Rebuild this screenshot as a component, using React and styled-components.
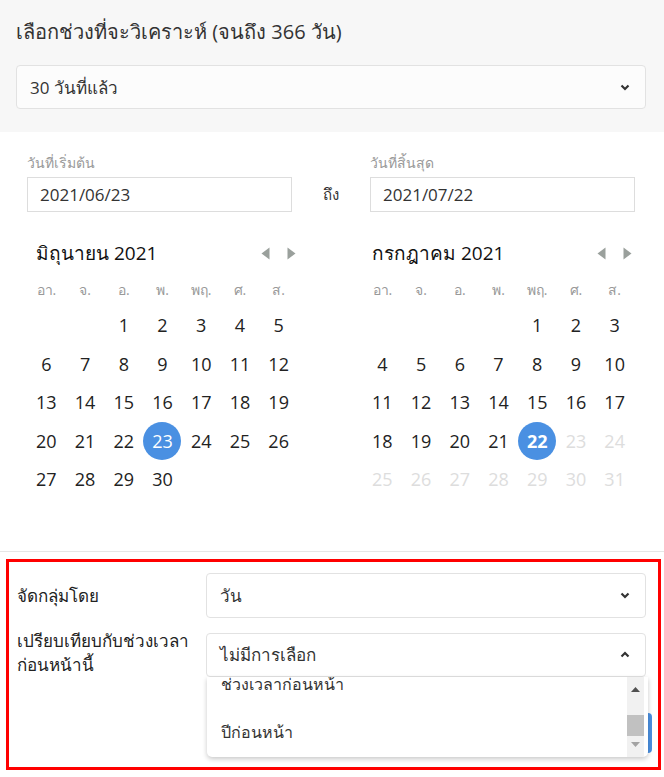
import React from "react";
import styled, { createGlobalStyle } from "styled-components";

const GlobalStyle = createGlobalStyle`
  body {
    margin: 0;
    background: #fff;
    font-family: "Open Sans", "Noto Sans", sans-serif;
    color: #333;
  }
`;

const Page = styled.div`
  width: 664px;
`;

const TopPanel = styled.div`
  background: #f7f7f7;
  padding: 18px 18px 23px 16px;
`;

const Title = styled.div`
  font-size: 20px;
  line-height: 28px;
  color: #333;
  margin-bottom: 19px;
`;

const SelectBox = styled.div`
  height: ${p => p.$h || 44}px;
  box-sizing: border-box;
  display: flex;
  align-items: center;
  justify-content: space-between;
  padding: 0 15px 0 13px;
  border: 1px solid #e2e2e2;
  border-radius: 4px;
  background: ${p => p.$bg || "#fff"};
  font-size: 17px;
  color: #333;
`;

const Chevron = ({ up }) => (
  <svg width="10" height="7" viewBox="0 0 10 7">
    <polyline
      points={up ? "1.5,5.5 5,2 8.5,5.5" : "1.5,1.5 5,5 8.5,1.5"}
      fill="none"
      stroke="#333"
      strokeWidth="2.2"
    />
  </svg>
);

const RangeSection = styled.div`
  padding: 20px 29px 0 27px;
`;

const DateRow = styled.div`
  display: grid;
  grid-template-columns: 265px 1fr 265px;
  align-items: end;
`;

const Field = styled.div`
  display: flex;
  flex-direction: column;
`;

const FieldLabel = styled.div`
  font-size: 14px;
  line-height: 22px;
  color: #999;
  margin-bottom: 3px;
`;

const DateInput = styled.div`
  height: 35px;
  box-sizing: border-box;
  border: 1px solid #ddd;
  padding-left: 12px;
  display: flex;
  align-items: center;
  font-size: 17px;
  color: #333;
`;

const ToText = styled.div`
  height: 35px;
  display: flex;
  align-items: center;
  justify-content: center;
  font-size: 15px;
  color: #333;
`;

const Calendars = styled.div`
  display: flex;
  justify-content: space-between;
  padding-right: 1px;
  margin-top: 24px;
`;

const Calendar = styled.div`
  width: 271px;
`;

const CalHeader = styled.div`
  display: flex;
  align-items: center;
  justify-content: space-between;
  height: 34px;
  padding: 0 2px 0 9px;
`;

const MonthName = styled.div`
  font-size: 19px;
  font-weight: 500;
  color: #111;
`;

const NavArrows = styled.div`
  display: flex;
  gap: 17px;
  align-items: center;
`;

const Arrow = ({ dir }) => (
  <svg width="9" height="13" viewBox="0 0 9 13">
    <polygon
      points={dir === "left" ? "8.5,0.5 8.5,12.5 0.5,6.5" : "0.5,0.5 0.5,12.5 8.5,6.5"}
      fill="#9aa09c"
    />
  </svg>
);

const Grid = styled.div`
  display: grid;
  grid-template-columns: repeat(7, 1fr);
  grid-auto-rows: ${p => p.$row}px;
  align-items: center;
  justify-items: center;
`;

const WeekDay = styled.div`
  font-size: 14px;
  color: #999;
  padding-top: 4px;
`;

const Day = styled.div`
  width: 38px;
  height: 38px;
  border-radius: 50%;
  display: flex;
  align-items: center;
  justify-content: center;
  font-size: 18px;
  color: ${p => (p.$selected ? "#fff" : p.$muted ? "#ddd" : "#222")};
  background: ${p => (p.$selected ? "#4a90e2" : "transparent")};
  font-weight: ${p => (p.$bold ? 700 : 400)};
`;

const Divider = styled.div`
  height: 1px;
  background: #e6e6e6;
  margin-top: 52px;
`;

const Frame = styled.div`
  margin: 7px 3px 0 6px;
  border: 3px solid #ff0000;
  padding: 11px 12px 14px 8px;
`;

const FormRow = styled.div`
  display: grid;
  grid-template-columns: 189px 1fr;
  margin-bottom: ${p => p.$mb || 0}px;
`;

const RowLabel = styled.div`
  font-size: 17px;
  line-height: 24px;
  color: #222;
  padding-top: ${p => p.$pt || 0}px;
  margin-top: ${p => p.$mt || 0}px;
`;

const SelectWrap = styled.div`
  position: relative;
`;

const Dropdown = styled.div`
  position: absolute;
  top: 100%;
  left: 1px;
  right: -2px;
  height: 80px;
  display: flex;
  background: #fff;
  border-radius: 0 0 5px 5px;
  box-shadow: 0 2px 5px rgba(0, 0, 0, 0.22);
  overflow: hidden;
  z-index: 2;
`;

const Viewport = styled.div`
  flex: 1;
  overflow: hidden;
`;

const Items = styled.div`
  margin-top: -${p => p.$scroll}px;
`;

const Item = styled.div`
  height: 48px;
  display: flex;
  align-items: center;
  padding-left: 14px;
  font-size: 16px;
  color: #333;
`;

const Scrollbar = styled.div`
  width: 17px;
  margin-right: 4px;
  background: #f1f1f1;
  display: flex;
  flex-direction: column;
  align-items: center;
`;

const ScrollArrow = styled.div`
  height: 17px;
  display: flex;
  align-items: center;
  justify-content: center;
  margin-top: ${p => p.$mt || 0}px;
`;

const Thumb = styled.div`
  width: 100%;
  height: 21px;
  background: #c1c1c1;
  margin-top: 17px;
`;

const ButtonRow = styled.div`
  display: flex;
  justify-content: flex-end;
  margin-top: 36px;
  margin-right: -6px;
`;

const ApplyButton = styled.div`
  width: 90px;
  height: 40px;
  border-radius: 4px;
  background: #4a90e2;
`;

const WEEK = ["อา.", "จ.", "อ.", "พ.", "พฤ.", "ศ.", "ส."];

const MonthCalendar = ({ name, lead, days, selected, boldSelected }) => {
  const cells = [];
  for (let i = 0; i < lead; i++) cells.push(<div key={"e" + i} />);
  for (let d = 1; d <= days; d++) {
    cells.push(
      <Day
        key={d}
        $selected={d === selected}
        $muted={boldSelected && d > selected}
        $bold={boldSelected && d === selected}
      >
        {d}
      </Day>
    );
  }
  return (
    <Calendar>
      <CalHeader>
        <MonthName>{name}</MonthName>
        <NavArrows>
          <Arrow dir="left" />
          <Arrow dir="right" />
        </NavArrows>
      </CalHeader>
      <Grid $row={36}>
        {WEEK.map(w => (
          <WeekDay key={w}>{w}</WeekDay>
        ))}
      </Grid>
      <Grid $row={38.5}>{cells}</Grid>
    </Calendar>
  );
};

export default function App() {
  return (
    <Page>
      <GlobalStyle />
      <TopPanel>
        <Title>เลือกช่วงที่จะวิเคราะห์ (จนถึง 366 วัน)</Title>
        <SelectBox $bg="#fcfcfc">
          <span>30 วันที่แล้ว</span>
          <Chevron />
        </SelectBox>
      </TopPanel>

      <RangeSection>
        <DateRow>
          <Field>
            <FieldLabel>วันที่เริ่มต้น</FieldLabel>
            <DateInput>2021/06/23</DateInput>
          </Field>
          <ToText>ถึง</ToText>
          <Field>
            <FieldLabel>วันที่สิ้นสุด</FieldLabel>
            <DateInput>2021/07/22</DateInput>
          </Field>
        </DateRow>
        <Calendars>
          <MonthCalendar name="มิถุนายน 2021" lead={2} days={30} selected={23} />
          <MonthCalendar name="กรกฎาคม 2021" lead={4} days={31} selected={22} boldSelected />
        </Calendars>
      </RangeSection>

      <Divider />

      <Frame>
        <FormRow $mb={15}>
          <RowLabel $pt={11}>จัดกลุ่มโดย</RowLabel>
          <SelectBox $h={45}>
            <span>วัน</span>
            <Chevron />
          </SelectBox>
        </FormRow>
        <FormRow>
          <RowLabel $mt={-4}>
            เปรียบเทียบกับช่วงเวลา
            <br />
            ก่อนหน้านี้
          </RowLabel>
          <SelectWrap>
            <SelectBox>
              <span>ไม่มีการเลือก</span>
              <Chevron up />
            </SelectBox>
            <Dropdown>
              <Viewport>
                <Items $scroll={16}>
                  <Item>ช่วงเวลาก่อนหน้า</Item>
                  <Item>ปีก่อนหน้า</Item>
                </Items>
              </Viewport>
              <Scrollbar>
                <ScrollArrow $mt={4}>
                  <svg width="9" height="5" viewBox="0 0 9 5">
                    <polygon points="0,5 9,5 4.5,0" fill="#505050" />
                  </svg>
                </ScrollArrow>
                <Thumb />
                <ScrollArrow>
                  <svg width="9" height="5" viewBox="0 0 9 5">
                    <polygon points="0,0 9,0 4.5,5" fill="#a3a3a3" />
                  </svg>
                </ScrollArrow>
              </Scrollbar>
            </Dropdown>
          </SelectWrap>
        </FormRow>
        <ButtonRow>
          <ApplyButton />
        </ButtonRow>
      </Frame>
    </Page>
  );
}
